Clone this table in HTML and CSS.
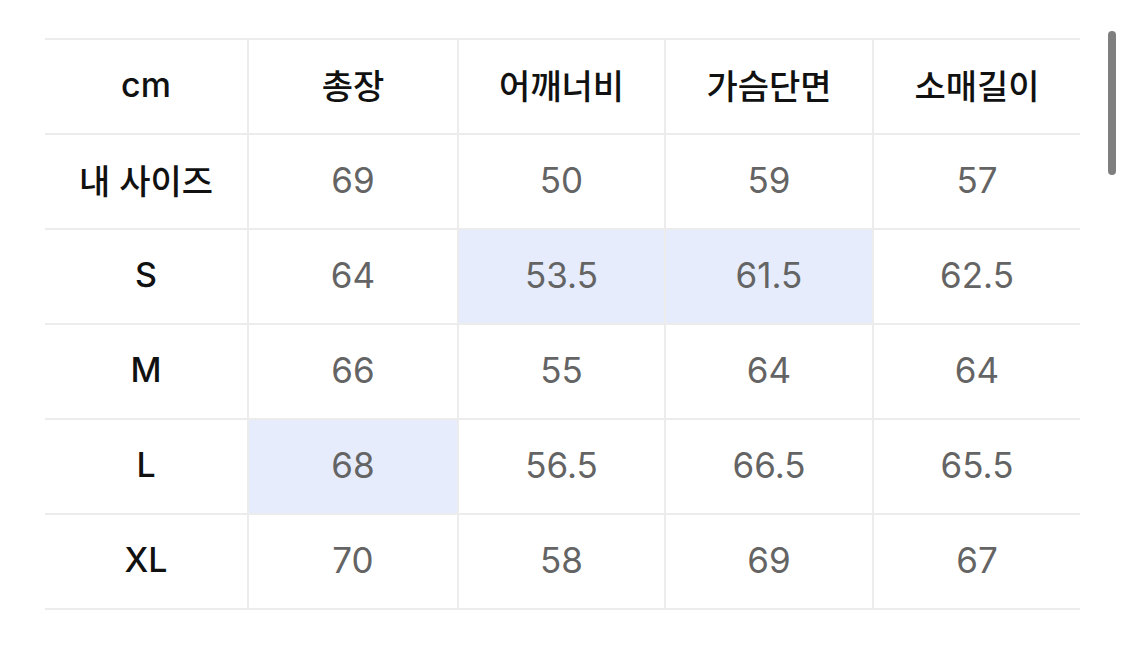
FILE: index.html
```html
<!DOCTYPE html>
<html lang="ko">
<head>
<meta charset="utf-8">
<link rel="stylesheet" href="styles.css">
</head>
<body>
<div class="page">
  <div class="size-table">
    <div class="cell head label">cm</div>
    <div class="cell head">총장</div>
    <div class="cell head">어깨너비</div>
    <div class="cell head">가슴단면</div>
    <div class="cell head last">소매길이</div>

    <div class="cell label">내 사이즈</div>
    <div class="cell num">69</div>
    <div class="cell num">50</div>
    <div class="cell num">59</div>
    <div class="cell num last">57</div>

    <div class="cell label">S</div>
    <div class="cell num">64</div>
    <div class="cell num hl">53.5</div>
    <div class="cell num hl">61.5</div>
    <div class="cell num last">62.5</div>

    <div class="cell label">M</div>
    <div class="cell num">66</div>
    <div class="cell num">55</div>
    <div class="cell num">64</div>
    <div class="cell num last">64</div>

    <div class="cell label">L</div>
    <div class="cell num hl">68</div>
    <div class="cell num">56.5</div>
    <div class="cell num">66.5</div>
    <div class="cell num last">65.5</div>

    <div class="cell label">XL</div>
    <div class="cell num">70</div>
    <div class="cell num">58</div>
    <div class="cell num">69</div>
    <div class="cell num last">67</div>
  </div>
  <div class="scrollbar"></div>
</div>
</body>
</html>
```

FILE: styles.css
```css
html, body {
  margin: 0;
  padding: 0;
  background: #ffffff;
}

.page {
  position: relative;
  width: 1125px;
  height: 648px;
  padding: 38px 0 0 45px;
  box-sizing: border-box;
  font-family: "Inter", "Noto Sans CJK KR", sans-serif;
}

.size-table {
  display: grid;
  grid-template-columns: 204px 210px 207px 208px 206px;
  grid-auto-rows: 95px;
  width: 1035px;
  border-top: 2px solid #ececec;
}

.cell {
  display: flex;
  align-items: center;
  justify-content: center;
  padding-bottom: 4px;
  border-bottom: 2px solid #ececec;
  border-right: 2px solid #ececec;
  font-size: 34px;
  box-sizing: border-box;
  background: #ffffff;
}

.cell.last {
  border-right: none;
}

.head,
.label {
  color: #111111;
  font-weight: 500;
}

.num {
  color: #646464;
  font-weight: 400;
  font-size: 35px;
}

.hl {
  background: #e6ecfc;
}

.scrollbar {
  position: absolute;
  left: 1108px;
  top: 31px;
  width: 8px;
  height: 144px;
  border-radius: 4px;
  background: #7f7f7f;
}
```
